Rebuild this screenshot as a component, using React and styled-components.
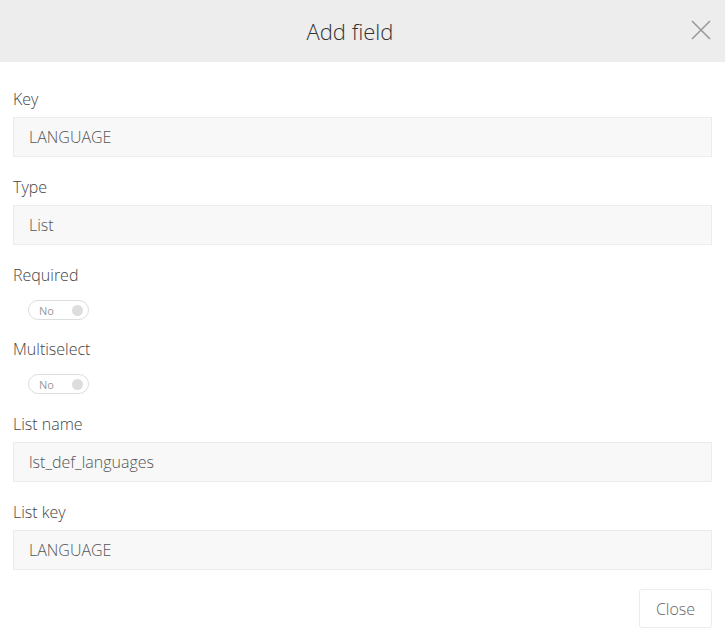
import React from 'react'
import styled, { createGlobalStyle } from 'styled-components'

const Global = createGlobalStyle`
  body {
    margin: 0;
    background: #fff;
    font-family: "Open Sans", "Liberation Sans", sans-serif;
  }
`

const Modal = styled.div`
  width: 725px;
  height: 633px;
  background: #fff;
  display: flex;
  flex-direction: column;
`

const Header = styled.div`
  height: 62px;
  background: #ededed;
  display: flex;
  align-items: center;
  justify-content: center;
  padding-right: 25px;
  position: relative;
`

const Title = styled.h1`
  margin: 0;
  font-weight: 300;
  font-size: 22px;
  color: #333;
`

const CloseX = styled.button`
  position: absolute;
  right: 12px;
  top: 18px;
  width: 24px;
  height: 24px;
  padding: 0;
  border: none;
  background: none;
  cursor: pointer;
`

const Body = styled.div`
  padding: 27px 13px 0 13px;
  display: flex;
  flex-direction: column;
`

const Field = styled.div`
  display: flex;
  flex-direction: column;
  margin-bottom: ${p => p.$gap || 20}px;
`

const Label = styled.label`
  font-size: 16px;
  line-height: 20px;
  font-weight: 300;
  color: #444;
  margin-bottom: ${p => p.$gap || 8}px;
`

const Input = styled.div`
  height: 38px;
  border: 1px solid #ececec;
  background: #f8f8f8;
  display: flex;
  align-items: center;
  padding: 0 15px;
  font-size: 16px;
  font-weight: 300;
  color: #555;
`

const Toggle = styled.div`
  margin-left: 15px;
  height: 18px;
  width: 44px;
  border: 1px solid #ddd;
  border-radius: 10px;
  display: flex;
  align-items: center;
  justify-content: space-between;
  padding: 0 5px 0 10px;
  font-size: 11px;
  color: #999;
`

const Knob = styled.span`
  width: 11px;
  height: 11px;
  border-radius: 50%;
  background: #ddd;
`

const Footer = styled.div`
  display: flex;
  justify-content: flex-end;
  padding: 0 13px;
`

const Button = styled.button`
  height: 39px;
  width: 73px;
  border: 1px solid #ececec;
  border-radius: 3px;
  background: #fff;
  font-family: inherit;
  font-size: 16px;
  font-weight: 300;
  color: #666;
`

const TextField = ({ label, value, gap }) => (
  <Field $gap={gap}>
    <Label>{label}</Label>
    <Input>{value}</Input>
  </Field>
)

const SwitchField = ({ label, gap }) => (
  <Field $gap={gap}>
    <Label $gap={15}>{label}</Label>
    <Toggle>
      No
      <Knob />
    </Toggle>
  </Field>
)

const App = () => (
  <Modal>
    <Global />
    <Header>
      <Title>Add field</Title>
      <CloseX aria-label="close">
        <svg width="24" height="24" viewBox="0 0 24 24">
          <path d="M3 3 L21 21 M21 3 L3 21" stroke="#999" strokeWidth="1.6" fill="none" />
        </svg>
      </CloseX>
    </Header>
    <Body>
      <TextField label="Key" value="LANGUAGE" />
      <TextField label="Type" value="List" />
      <SwitchField label="Required" gap={19} />
      <SwitchField label="Multiselect" gap={20} />
      <TextField label="List name" value="lst_def_languages" />
      <TextField label="List key" value="LANGUAGE" gap={19} />
    </Body>
    <Footer>
      <Button>Close</Button>
    </Footer>
  </Modal>
)

export default App
